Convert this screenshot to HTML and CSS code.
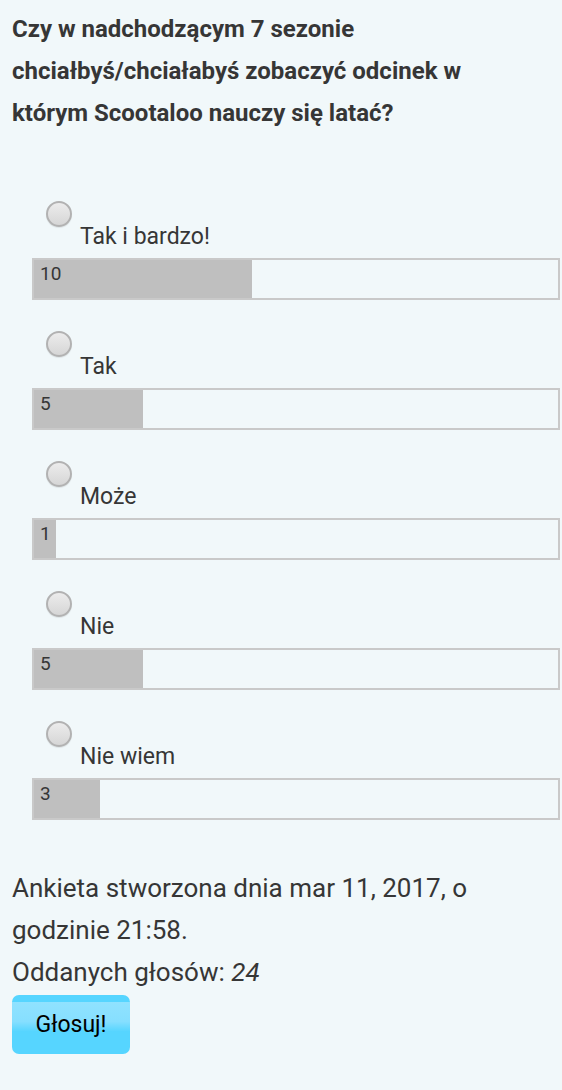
FILE: index.html
```html
<!DOCTYPE html>
<html lang="pl">
<head>
  <meta charset="UTF-8" />
  <meta name="viewport" content="width=device-width, initial-scale=1.0"/>
  <title>Ankieta</title>
  <link rel="stylesheet" href="styles.css">
</head>
<body>
  <div class="poll">
    <h3 class="poll-question">Czy w nadchodzącym 7 sezonie chciałbyś/chciałabyś zobaczyć odcinek w którym Scootaloo nauczy się latać?</h3>

    <form class="poll-options">
      <div class="option">
        <input type="radio" name="vote" class="radio">
        <label class="option-label">Tak i bardzo!</label>
        <div class="bar"><div class="bar-fill" style="width: 41.67%">10</div></div>
      </div>
      <div class="option">
        <input type="radio" name="vote" class="radio">
        <label class="option-label">Tak</label>
        <div class="bar"><div class="bar-fill" style="width: 20.83%">5</div></div>
      </div>
      <div class="option">
        <input type="radio" name="vote" class="radio">
        <label class="option-label">Może</label>
        <div class="bar"><div class="bar-fill" style="width: 4.17%">1</div></div>
      </div>
      <div class="option">
        <input type="radio" name="vote" class="radio">
        <label class="option-label">Nie</label>
        <div class="bar"><div class="bar-fill" style="width: 20.83%">5</div></div>
      </div>
      <div class="option">
        <input type="radio" name="vote" class="radio">
        <label class="option-label">Nie wiem</label>
        <div class="bar"><div class="bar-fill" style="width: 12.5%">3</div></div>
      </div>
    </form>

    <p class="poll-info">Ankieta stworzona dnia mar 11, 2017, o godzinie 21:58.</p>
    <p class="poll-info">Oddanych głosów: <em>24</em></p>
    <button class="vote-btn">Głosuj!</button>
  </div>
</body>
</html>
```

FILE: styles.css
```css
body {
  margin: 0;
  background-color: #f1f8fa;
  color: #363636;
  font-family: Roboto, "Liberation Sans", sans-serif;
}
.poll {
  padding: 8px 12px 20px;
}
.poll-question {
  margin: 0;
  padding-right: 30px;
  font-size: 24px;
  font-weight: bold;
  line-height: 42px;
}
.poll-options {
  margin: 67px -10px 0 20px;
}
.option {
  display: flex;
  flex-direction: column;
  margin-bottom: 31px;
}
.radio {
  appearance: none;
  -webkit-appearance: none;
  width: 26px;
  height: 26px;
  margin: 0 0 0 14px;
  border: 2px solid #b2b2b2;
  border-radius: 50%;
  background: linear-gradient(#ececec, #d6d6d6);
  box-shadow: 0 1px 1px rgba(0, 0, 0, 0.08);
}
.option-label {
  margin-left: 48px;
  font-size: 23px;
  line-height: 20px;
}
.bar {
  margin-top: 11px;
  height: 38px;
  border: 2px solid #c9c9c9;
}
.bar-fill {
  height: 100%;
  background: #bfbfbf;
  font-size: 19px;
  line-height: 27px;
  padding-left: 6px;
  box-sizing: border-box;
}
.poll-info {
  margin: 0;
  font-size: 26px;
  line-height: 42px;
}
.poll-options + .poll-info {
  margin-top: 47px;
}
.vote-btn {
  margin-top: 2px;
  width: 118px;
  height: 59px;
  border: none;
  border-radius: 7px;
  background: linear-gradient(#56d5ff 0, #56d5ff 7px, #90e2ff 7px, #86dfff 45%, #56d5ff 62%, #56d5ff 100%);
  color: #000;
  font-family: Roboto, "Liberation Sans", sans-serif;
  font-size: 23px;
  cursor: pointer;
}
```
